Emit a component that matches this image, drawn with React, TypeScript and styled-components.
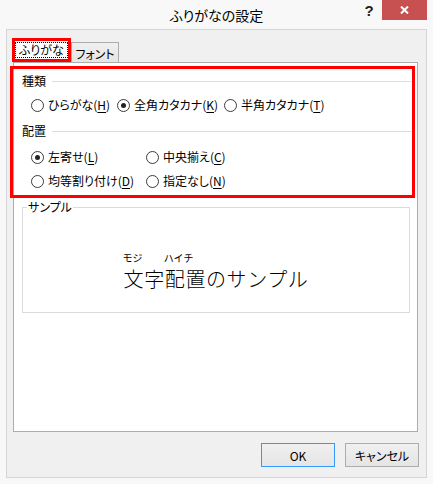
import React from "react";
import styled, { createGlobalStyle } from "styled-components";

const GlobalStyle = createGlobalStyle`
    html, body {
        margin: 0;
        padding: 0;
        background: #f8f8f8;
    }
    body {
        font-family: "Noto Sans CJK JP", "Noto Sans", sans-serif;
        font-size: 12px;
        color: #000;
    }
    * {
        box-sizing: border-box;
    }
`;

const Window = styled.div`
    width: 433px;
    height: 484px;
    display: flex;
    flex-direction: column;
    background: #f8f8f8;
    overflow: hidden;
`;

const TitleBar = styled.div`
    height: 29px;
    display: grid;
    grid-template-columns: 1fr auto 1fr;
    align-items: start;
`;

const Title = styled.div`
    grid-column: 2;
    font-size: 14px;
    line-height: 30px;
    font-feature-settings: "palt";
    color: #000;
`;

const Controls = styled.div`
    justify-self: end;
    display: flex;
    margin-right: 6px;
`;

const HelpButton = styled.div`
    width: 26px;
    height: 20px;
    display: flex;
    align-items: center;
    justify-content: center;
    font-family: "Liberation Sans", Arial, sans-serif;
    font-weight: bold;
    font-size: 15px;
    color: #1e1e1e;
`;

const CloseButton = styled.div`
    width: 45px;
    height: 20px;
    display: flex;
    align-items: center;
    justify-content: center;
    background: #c75050;
`;

const Client = styled.div`
    flex: 1;
    margin: 0 6px 6px 6px;
    border: 1px solid #d5d5d5;
    background: #f0f0f0;
    padding: 8px 8px 0 6px;
    display: flex;
    flex-direction: column;
`;

const TabStrip = styled.div`
    display: flex;
    align-items: flex-end;
    height: 24px;
`;

const Tab = styled.div<{ $active?: boolean }>`
    display: flex;
    align-items: center;
    justify-content: center;
    font-feature-settings: "palt";
    height: ${(p) => (p.$active ? 24 : 20)}px;
    width: ${(p) => (p.$active ? 59 : 48)}px;
    margin-left: ${(p) => (p.$active ? -1 : 0)}px;
    border: ${(p) => (p.$active ? "3px solid #ff0000" : "1px solid #acacac")};
    border-bottom: ${(p) => (p.$active ? "3px solid #ff0000" : "none")};
    background: ${(p) => (p.$active ? "#fff" : "linear-gradient(#f0f0f0, #e5e5e5)")};
    padding-top: ${(p) => (p.$active ? 0 : 1)}px;
`;

const FocusRect = styled.span`
    border: 1px dotted #000;
    padding: 0 3px;
    line-height: 14px;
`;

const Panel = styled.div`
    height: 370px;
    background: #fff;
    border: 1px solid #acacac;
    display: flex;
    flex-direction: column;
`;

const Highlight = styled.div`
    margin: 3px 0 0 -4px;
    width: 405px;
    height: 132px;
    border: 3px solid #ff0000;
    padding: 0 1px 0 9px;
    display: flex;
    flex-direction: column;
    font-feature-settings: "palt";
`;

const GroupHeader = styled.div<{ $top: number }>`
    display: flex;
    align-items: center;
    height: 16px;
    line-height: 16px;
    margin-top: ${(p) => p.$top}px;
`;

const HeaderLine = styled.div`
    flex: 1;
    height: 1px;
    background: #dcdcdc;
    margin-left: 6px;
`;

const RadioRow = styled.div<{ $columns: string; $top: number }>`
    display: grid;
    grid-template-columns: ${(p) => p.$columns};
    align-items: center;
    height: 16px;
    margin-left: 9px;
    margin-top: ${(p) => p.$top}px;
`;

const Option = styled.label`
    display: flex;
    align-items: center;
    gap: 4px;
    white-space: nowrap;
    line-height: 16px;
`;

const RadioCircle = styled.span<{ $checked?: boolean }>`
    width: 13px;
    height: 13px;
    border-radius: 50%;
    border: 1px solid #3c3c3c;
    background: #fff;
    display: flex;
    align-items: center;
    justify-content: center;
    flex-shrink: 0;

    &::after {
        content: "";
        display: ${(p) => (p.$checked ? "block" : "none")};
        width: 5px;
        height: 5px;
        border-radius: 50%;
        background: #222;
    }
`;

const AccessKey = styled.span`
    text-decoration: underline;
    text-underline-offset: 2px;
`;

const SampleBox = styled.div`
    position: relative;
    margin: 9px 0 0 8px;
    width: 388px;
    height: 106px;
    border: 1px solid #dcdcdc;
    padding-top: 44px;
    display: flex;
    justify-content: center;
    align-items: flex-start;
`;

const SampleLegend = styled.span`
    position: absolute;
    top: -8px;
    left: 4px;
    padding: 0 1px;
    background: #fff;
    line-height: 14px;
    font-feature-settings: "palt";
`;

const SampleText = styled.div`
    display: flex;
`;

const Word = styled.span`
    display: flex;
    flex-direction: column;
`;

const Ruby = styled.span`
    font-size: 10px;
    line-height: 12px;
    height: 12px;
    margin: 0 0 3px -1px;
`;

const Base = styled.span`
    font-size: 20px;
    font-weight: 300;
    line-height: 24px;
    letter-spacing: 0.6px;
`;

const ButtonRow = styled.div`
    display: flex;
    justify-content: flex-end;
    gap: 10px;
    margin-top: 11px;
    margin-right: -1px;
`;

const DialogButton = styled.button<{ $default?: boolean }>`
    width: 74px;
    height: 24px;
    padding: 0;
    border: 1px solid ${(p) => (p.$default ? "#3399ff" : "#acacac")};
    background: linear-gradient(#f0f0f0, #e5e5e5);
    font-family: inherit;
    font-size: 12px;
    font-feature-settings: "palt";
    color: #000;
`;

type RadioDef = { label: string; key: string; checked?: boolean };

const kindOptions: RadioDef[] = [
    { label: "ひらがな", key: "H" },
    { label: "全角カタカナ", key: "K", checked: true },
    { label: "半角カタカナ", key: "T" },
];

const alignRows: RadioDef[][] = [
    [
        { label: "左寄せ", key: "L", checked: true },
        { label: "中央揃え", key: "C" },
    ],
    [
        { label: "均等割り付け", key: "D" },
        { label: "指定なし", key: "N" },
    ],
];

const Radio: React.FC<{ item: RadioDef }> = ({ item }) => (
    <Option>
        <RadioCircle $checked={item.checked} />
        <span>
            {item.label}(<AccessKey>{item.key}</AccessKey>)
        </span>
    </Option>
);

const App: React.FC = () => {
    return (
        <>
            <GlobalStyle />
            <Window>
                <TitleBar>
                    <Title>ふりがなの設定</Title>
                    <Controls>
                        <HelpButton>?</HelpButton>
                        <CloseButton>
                            <svg width="9" height="8" viewBox="0 0 9 8">
                                <path d="M1 0.5 L8 7.5 M8 0.5 L1 7.5" stroke="#fff" strokeWidth="2" />
                            </svg>
                        </CloseButton>
                    </Controls>
                </TitleBar>
                <Client>
                    <TabStrip>
                        <Tab $active>
                            <FocusRect>ふりがな</FocusRect>
                        </Tab>
                        <Tab>フォント</Tab>
                    </TabStrip>
                    <Panel>
                        <Highlight>
                            <GroupHeader $top={4}>
                                種類
                                <HeaderLine />
                            </GroupHeader>
                            <RadioRow $columns="86px 107px auto" $top={8}>
                                {kindOptions.map((o) => (
                                    <Radio key={o.key} item={o} />
                                ))}
                            </RadioRow>
                            <GroupHeader $top={10}>
                                配置
                                <HeaderLine />
                            </GroupHeader>
                            {alignRows.map((row, i) => (
                                <RadioRow key={i} $columns="115px auto" $top={i === 0 ? 10 : 8}>
                                    {row.map((o) => (
                                        <Radio key={o.key} item={o} />
                                    ))}
                                </RadioRow>
                            ))}
                        </Highlight>
                        <SampleBox>
                            <SampleLegend>サンプル</SampleLegend>
                            <SampleText>
                                <Word>
                                    <Ruby>モジ</Ruby>
                                    <Base>文字</Base>
                                </Word>
                                <Word>
                                    <Ruby>ハイチ</Ruby>
                                    <Base>配置</Base>
                                </Word>
                                <Word>
                                    <Ruby />
                                    <Base>のサンプル</Base>
                                </Word>
                            </SampleText>
                        </SampleBox>
                    </Panel>
                    <ButtonRow>
                        <DialogButton $default>OK</DialogButton>
                        <DialogButton>キャンセル</DialogButton>
                    </ButtonRow>
                </Client>
            </Window>
        </>
    );
};

export default App;
